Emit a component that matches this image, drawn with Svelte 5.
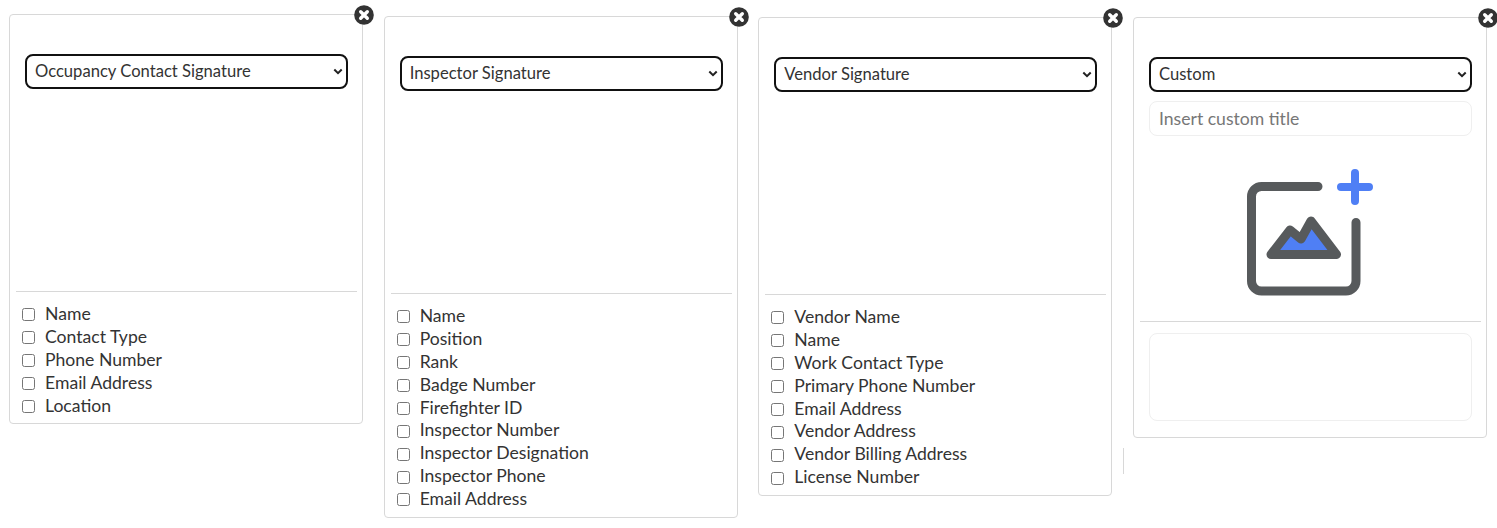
<script>
    const cards = [
        {
            cls: "first",
            value: "Occupancy Contact Signature",
            fields: ["Name", "Contact Type", "Phone Number", "Email Address", "Location"],
        },
        {
            cls: "second",
            value: "Inspector Signature",
            fields: ["Name", "Position", "Rank", "Badge Number", "Firefighter ID", "Inspector Number", "Inspector Designation", "Inspector Phone", "Email Address"],
        },
        {
            cls: "third",
            value: "Vendor Signature",
            fields: ["Vendor Name", "Name", "Work Contact Type", "Primary Phone Number", "Email Address", "Vendor Address", "Vendor Billing Address", "License Number"],
        },
        { cls: "fourth", value: "Custom", custom: true, fields: [] },
    ];
    const options = ["Occupancy Contact Signature", "Inspector Signature", "Vendor Signature", "Custom"];
</script>

<div class="row">
    {#each cards as card}
        <div class="card {card.cls}">
            <button class="close" aria-label="Remove">
                <svg viewBox="0 0 20 20" width="20" height="20">
                    <circle cx="10" cy="10" r="9.8" fill="#333" />
                    <path d="M6.7 6.7l6.6 6.6M13.3 6.7l-6.6 6.6" stroke="#fff" stroke-width="3.4" stroke-linecap="round" />
                </svg>
            </button>
            <div class="top" class:custom={card.custom}>
                <div class="pick">
                    <select value={card.value}>
                        {#each options as o}
                            <option value={o}>{o}</option>
                        {/each}
                    </select>
                    <svg class="chevron" viewBox="0 0 10 7" width="10" height="7">
                        <path d="M1.3 1.5L5 5.2l3.7-3.7" fill="none" stroke="#222" stroke-width="2" />
                    </svg>
                </div>
                {#if card.custom}
                    <input class="title" type="text" placeholder="Insert custom title" />
                    <div class="upload">
                        <svg viewBox="0 0 140 135" width="140" height="135">
                            <path d="M78 21.5H21.5a10 10 0 0 0-10 10V116a10 10 0 0 0 10 10H106a10 10 0 0 0 10-10V57.5" fill="none" stroke="#575a5c" stroke-width="9" stroke-linecap="round" />
                            <path d="M31 89.5L50 65l11 9 10-18 25.5 33.5z" fill="#4f7ff5" stroke="#575a5c" stroke-width="9" stroke-linejoin="round" />
                            <path d="M115 8v28M101 22h28" stroke="#4f7ff5" stroke-width="8" stroke-linecap="round" />
                        </svg>
                    </div>
                {/if}
            </div>
            <hr />
            {#if card.custom}
                <div class="box"></div>
            {:else}
                <div class="fields">
                    {#each card.fields as f}
                        <label><input type="checkbox" />{f}</label>
                    {/each}
                </div>
            {/if}
        </div>
    {/each}
    <div class="divider"></div>
</div>

<style>
    :global(body) {
        margin: 0;
        background: #fff;
    }

    .row {
        position: relative;
        display: flex;
        align-items: flex-start;
        gap: 20.67px;
        padding-left: 9px;
        height: 528px;
        overflow: hidden;
        font-family: Lato, sans-serif;
        font-size: 17.6px;
        color: #333;
    }

    .card {
        position: relative;
        box-sizing: border-box;
        width: 354px;
        flex: none;
        padding: 0 5px 0 6px;
        border: 1px solid #d8d8d8;
        border-radius: 4px;
    }

    .first { margin-top: 14px; }
    .second { margin-top: 16px; }
    .third { margin-top: 17px; }
    .fourth { margin-top: 17px; }

    .close {
        position: absolute;
        top: -10px;
        right: -12px;
        width: 20px;
        height: 20px;
        padding: 0;
        border: none;
        background: none;
    }

    .close svg {
        display: block;
    }

    .top {
        box-sizing: border-box;
        height: 276px;
        padding: 39px 9px 0;
    }

    .top.custom {
        height: 303px;
    }

    .pick {
        position: relative;
    }

    select {
        appearance: none;
        display: block;
        box-sizing: border-box;
        width: 100%;
        height: 35px;
        padding: 0 20px 2px 8px;
        border: 2px solid #111;
        border-radius: 8px;
        background: #fff;
        font-family: inherit;
        font-size: 16.6px;
        color: #333;
    }

    .chevron {
        position: absolute;
        right: 5px;
        top: 14px;
        pointer-events: none;
    }

    .title {
        display: block;
        box-sizing: border-box;
        width: 100%;
        height: 35px;
        margin-top: 9px;
        padding: 0 9px;
        border: 1px solid #efefef;
        border-radius: 8px;
        font: inherit;
        color: #333;
    }

    .title::placeholder {
        color: #777;
    }

    .upload {
        display: flex;
        justify-content: center;
        margin-top: 29px;
    }

    .upload svg {
        display: block;
    }

    hr {
        height: 1px;
        margin: 0;
        border: none;
        background: #d8d8d8;
    }

    .fields {
        display: flex;
        flex-direction: column;
        padding: 11px 0 6px 6px;
    }

    label {
        display: flex;
        align-items: center;
        height: 22.88px;
        line-height: 22.88px;
    }

    label input {
        appearance: none;
        flex: none;
        box-sizing: border-box;
        width: 13px;
        height: 13px;
        margin: 1px 10px 0 0;
        border: 1px solid #767676;
        border-radius: 2.5px;
        background: #fff;
    }

    .box {
        box-sizing: border-box;
        height: 88px;
        margin: 11px 9px 16px;
        border: 1px solid #efefef;
        border-radius: 8px;
    }

    .divider {
        position: absolute;
        left: 1123px;
        top: 448px;
        width: 1px;
        height: 26px;
        background: #d8d8d8;
    }
</style>
